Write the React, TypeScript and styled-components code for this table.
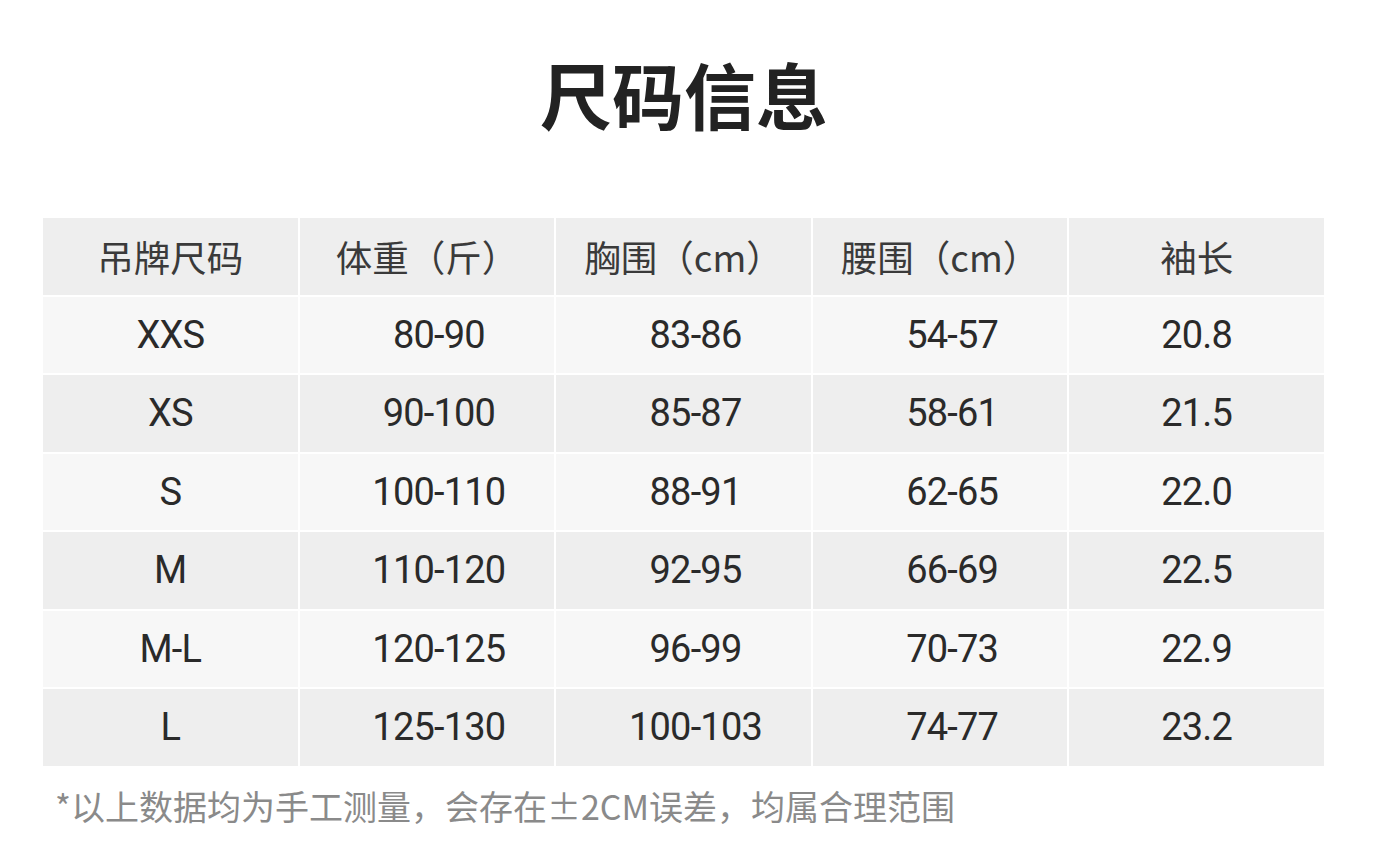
import React from 'react';
import styled, { createGlobalStyle } from 'styled-components';

const GlobalStyle = createGlobalStyle`
  html, body {
    margin: 0;
    padding: 0;
    background: #ffffff;
  }
  body {
    font-family: Roboto, "Noto Sans CJK SC", sans-serif;
  }
`;

const Page = styled.div`
  width: 1384px;
  height: 856px;
  background: #ffffff;
  padding-top: 54px;
  box-sizing: border-box;
  overflow: hidden;
`;

const Title = styled.h1`
  margin: 0;
  padding-right: 16px;
  text-align: center;
  font-family: "Noto Sans CJK SC", sans-serif;
  font-size: 72px;
  line-height: 78px;
  font-weight: 700;
  color: #222222;
`;

const Table = styled.div`
  margin: 86px 0 0 43px;
  width: 1281px;
  display: grid;
  grid-template-columns: repeat(5, 1fr);
  grid-auto-rows: 76.5px;
  gap: 2px;
  background: #ffffff;
`;

const Cell = styled.div<{ $tone: 'head' | 'light' | 'grey'; $shift?: boolean }>`
  display: flex;
  align-items: center;
  justify-content: center;
  padding-left: ${p => (p.$shift ? '24px' : '0')};
  background: ${p => (p.$tone === 'light' ? '#f7f7f7' : '#eeeeee')};
  color: ${p => (p.$tone === 'head' ? '#3a3a3a' : '#2a2a2a')};
  font-family: ${p =>
    p.$tone === 'head'
      ? '"Noto Sans CJK SC", sans-serif'
      : 'Roboto, "Noto Sans CJK SC", sans-serif'};
  font-size: ${p => (p.$tone === 'head' ? '36.5px' : '38px')};
  letter-spacing: ${p => (p.$tone === 'head' ? '0' : '-0.8px')};
  font-weight: 400;
`;

const Note = styled.p`
  margin: 18px 0 0 55px;
  font-family: "Noto Sans CJK SC", sans-serif;
  font-size: 34px;
  line-height: 44px;
  color: #8a8a8a;
`;

const headers = ['吊牌尺码', '体重（斤）', '胸围（cm）', '腰围（cm）', '袖长'];

const rows = [
  ['XXS', '80-90', '83-86', '54-57', '20.8'],
  ['XS', '90-100', '85-87', '58-61', '21.5'],
  ['S', '100-110', '88-91', '62-65', '22.0'],
  ['M', '110-120', '92-95', '66-69', '22.5'],
  ['M-L', '120-125', '96-99', '70-73', '22.9'],
  ['L', '125-130', '100-103', '74-77', '23.2'],
];

const App: React.FC = () => {
  return (
    <Page>
      <GlobalStyle />
      <Title>尺码信息</Title>
      <Table>
        {headers.map(h => (
          <Cell key={h} $tone="head">{h}</Cell>
        ))}
        {rows.map((row, i) =>
          row.map((v, j) => (
            <Cell
              key={`${i}-${j}`}
              $tone={i % 2 === 0 ? 'light' : 'grey'}
              $shift={j >= 1 && j <= 3}
            >
              {v}
            </Cell>
          ))
        )}
      </Table>
      <Note>*以上数据均为手工测量，会存在±2CM误差，均属合理范围</Note>
    </Page>
  );
};

export default App;
